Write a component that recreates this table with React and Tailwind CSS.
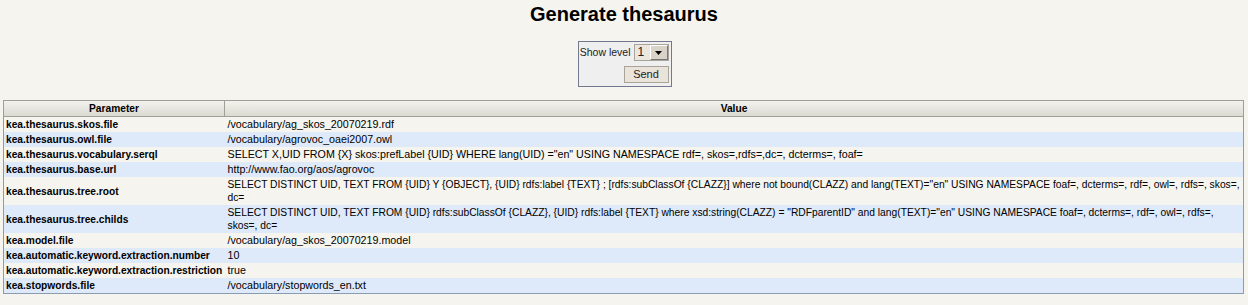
import React from 'react';

const rows = [
  ['kea.thesaurus.skos.file', '/vocabulary/ag_skos_20070219.rdf'],
  ['kea.thesaurus.owl.file', '/vocabulary/agrovoc_oaei2007.owl'],
  ['kea.thesaurus.vocabulary.serql', 'SELECT X,UID FROM {X} skos:prefLabel {UID} WHERE lang(UID) ="en" USING NAMESPACE rdf=, skos=,rdfs=,dc=, dcterms=, foaf='],
  ['kea.thesaurus.base.url', 'http://www.fao.org/aos/agrovoc'],
  ['kea.thesaurus.tree.root', 'SELECT DISTINCT UID, TEXT FROM {UID} Y {OBJECT}, {UID} rdfs:label {TEXT} ; [rdfs:subClassOf {CLAZZ}] where not bound(CLAZZ) and lang(TEXT)="en" USING NAMESPACE foaf=, dcterms=, rdf=, owl=, rdfs=, skos=, dc=', true],
  ['kea.thesaurus.tree.childs', 'SELECT DISTINCT UID, TEXT FROM {UID} rdfs:subClassOf {CLAZZ}, {UID} rdfs:label {TEXT} where xsd:string(CLAZZ) = "RDFparentID" and lang(TEXT)="en" USING NAMESPACE foaf=, dcterms=, rdf=, owl=, rdfs=, skos=, dc=', true],
  ['kea.model.file', '/vocabulary/ag_skos_20070219.model'],
  ['kea.automatic.keyword.extraction.number', '10'],
  ['kea.automatic.keyword.extraction.restriction', 'true'],
  ['kea.stopwords.file', '/vocabulary/stopwords_en.txt'],
];

export default function App() {
  return (
    <div className="min-h-[305px] bg-[#f5f4ef] font-['Liberation_Sans',Arial,sans-serif] text-black">
      <h2 className="pt-[3px] text-center text-[20px] font-bold leading-[23px]">Generate thesaurus</h2>

      <div className="mt-[15px] flex justify-center">
        <div className="ml-[1px] flex w-[94px] flex-col items-end gap-[5px] border border-[#737790] bg-[#efefef] pr-[2px] pt-[2px] pb-[2px]">
          <div className="flex items-center gap-[3px] whitespace-nowrap text-[10.5px]">
            <span className="text-[#222]">Show level</span>
            <div className="flex h-[17px] w-[35px] items-stretch border border-[#a8a49c] bg-[#ece7de]">
              <span className="flex-1 pl-[3px] text-[12px] leading-[15px] text-[#222]">1</span>
              <span className="flex w-[18px] items-center justify-center border-t border-l border-t-white border-l-white border-r border-b border-r-[#777] border-b-[#777] bg-[#d8d2c8]">
                <svg width="7" height="4" viewBox="0 0 7 4"><path d="M0 0h7L3.5 4z" fill="#000" /></svg>
              </span>
            </div>
          </div>
          <button className="mb-[1px] h-[17px] w-[45px] border border-[#a8a49c] bg-[#e9e3da] text-[11px] leading-[15px] text-[#222]">Send</button>
        </div>
      </div>

      <table className="mt-[13px] ml-[3px] w-[1241px] table-fixed border-collapse border border-[#8a9cb2] text-[10.7px] leading-[13px]">
        <thead>
          <tr className="bg-gradient-to-b from-[#f3f2ed] to-[#d9d8d0]">
            <th className="w-[221px] border border-[#a09f96] py-[1px] text-[10.2px] font-bold">Parameter</th>
            <th className="border border-[#a09f96] py-[1px] text-[10.2px] font-bold">Value</th>
          </tr>
        </thead>
        <tbody>
          {rows.map(([k, v, tight], i) => (
            <tr key={k} className={i % 2 ? 'bg-[#dee9fa]' : 'bg-[#f5f4ef]'}>
              <td className="whitespace-nowrap py-[1px] pl-[2px] align-middle text-[10.2px] font-bold">{k}</td>
              <td className={`py-[1px] pl-[3px] align-middle ${tight ? 'text-[10.27px]' : ''}`}>{v}</td>
            </tr>
          ))}
        </tbody>
      </table>
    </div>
  );
}
